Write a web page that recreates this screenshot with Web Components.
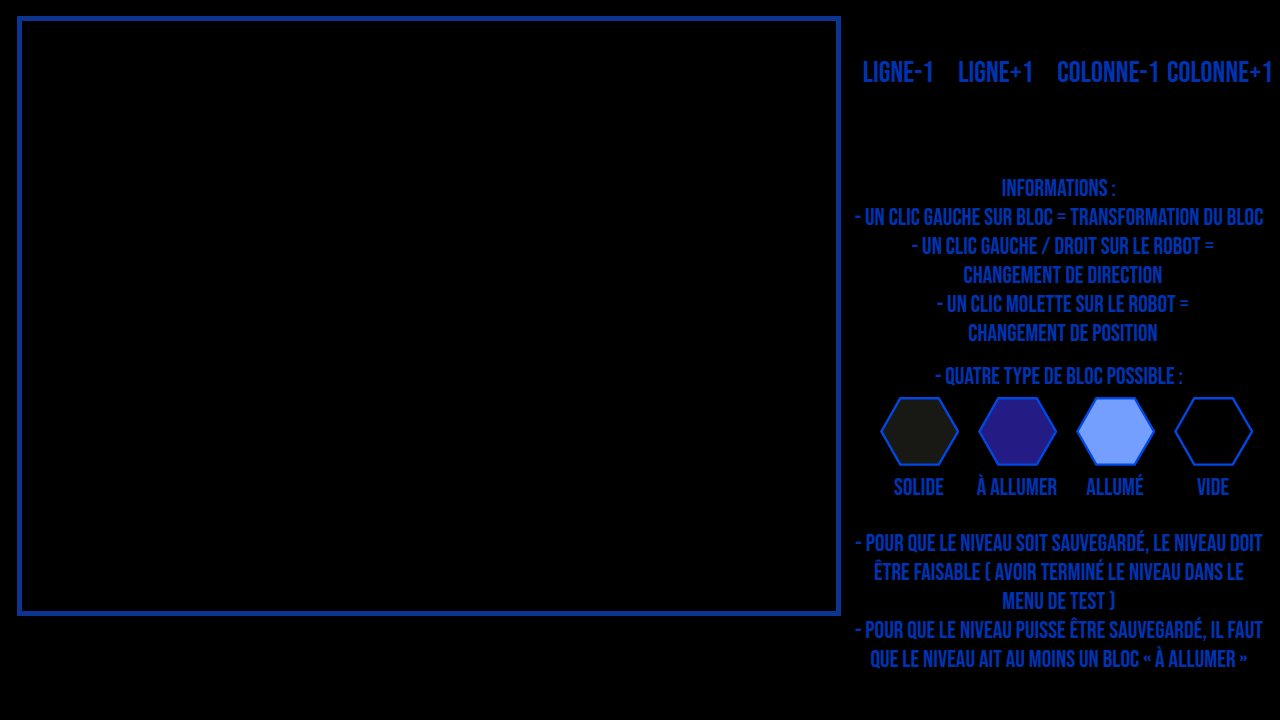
<!DOCTYPE html>
<html lang="fr">
<head>
<meta charset="utf-8">
<title>Éditeur de niveau</title>
<style>
  html, body { margin: 0; min-height: 100%; background: #000; }
  body {
    color: #0033b0;
    font-family: "Bebas Neue", "Liberation Sans Narrow", sans-serif;
    font-size: 24px;
    line-height: 29px;
  }
</style>
</head>
<body>
<level-editor></level-editor>
<script>
  const define = (name, html) => customElements.define(name, class extends HTMLElement {
    constructor() {
      super();
      this.attachShadow({ mode: "open" }).innerHTML = html;
    }
  });

  define("level-board", `
    <style>
      :host { display: block; box-sizing: border-box; border: 5px solid #0b3591; aspect-ratio: 824 / 600; }
    </style>`);

  define("editor-command", `
    <style>
      :host { display: grid; justify-content: center; }
      button {
        display: block; margin: 0; padding: 0; border: 0; background: none;
        color: inherit; font: inherit; font-size: 30px; line-height: 36px;
        white-space: nowrap; cursor: pointer;
      }
    </style>
    <button type="button"><slot></slot></button>`);

  define("info-lines", `
    <style>
      :host { display: block; text-align: center; white-space: nowrap; }
      p { margin: 0; }
    </style>
    <p><slot></slot></p>`);

  define("block-type", `
    <style>
      :host { display: grid; justify-items: center; row-gap: 6px; white-space: nowrap; }
      svg { display: block; width: 80px; height: 70px; }
      polygon { fill: var(--block-fill, #000); stroke: #0048e4; stroke-width: 2.4; }
    </style>
    <svg viewBox="0 0 80 70" aria-hidden="true">
      <polygon points="21.3,1.2 59.7,1.2 79,34.5 59.7,67.6 21.3,67.6 2.4,34.5"/>
    </svg>
    <span><slot></slot></span>`);

  define("block-legend", `
    <style>
      :host { display: grid; grid-template-columns: repeat(4, 1fr); padding: 0 6px 0 20px; }
    </style>
    <slot></slot>`);

  define("level-editor", `
    <style>
      :host {
        display: grid; grid-template-columns: 824fr 418fr; column-gap: 9px;
        align-items: start; padding: 16px 12px 16px 17px;
      }
      nav {
        display: grid; grid-template-columns: 97fr 98fr 127fr 96fr;
        padding: 39px 0 83px;
      }
      editor-command { min-width: 0; }
      .mouse { padding-left: 8px; }
      .types { padding-top: 14px; }
      block-legend { margin-top: 6px; }
      .rules { padding-top: 27px; }
    </style>
    <level-board></level-board>
    <aside>
      <nav aria-label="Taille du niveau">
        <editor-command>LIGNE-1</editor-command>
        <editor-command>LIGNE+1</editor-command>
        <editor-command>COLONNE-1</editor-command>
        <editor-command>COLONNE+1</editor-command>
      </nav>
      <info-lines>INFORMATIONS :<br>- UN CLIC GAUCHE SUR BLOC = TRANSFORMATION DU BLOC</info-lines>
      <info-lines class="mouse">- UN CLIC GAUCHE / DROIT SUR LE ROBOT =<br>CHANGEMENT DE DIRECTION<br>- UN CLIC MOLETTE SUR LE ROBOT =<br>CHANGEMENT DE POSITION</info-lines>
      <info-lines class="types">- QUATRE TYPE DE BLOC POSSIBLE :</info-lines>
      <block-legend>
        <block-type style="--block-fill: #181814">SOLIDE</block-type>
        <block-type style="--block-fill: #231c84">À ALLUMER</block-type>
        <block-type style="--block-fill: #759fff">ALLUMÉ</block-type>
        <block-type>VIDE</block-type>
      </block-legend>
      <info-lines class="rules">- POUR QUE LE NIVEAU SOIT SAUVEGARDÉ, LE NIVEAU DOIT<br>ÊTRE FAISABLE ( AVOIR TERMINÉ LE NIVEAU DANS LE<br>MENU DE TEST )<br>- POUR QUE LE NIVEAU PUISSE ÊTRE SAUVEGARDÉ, IL FAUT<br>QUE LE NIVEAU AIT AU MOINS UN BLOC « À ALLUMER »</info-lines>
    </aside>`);
</script>
</body>
</html>
